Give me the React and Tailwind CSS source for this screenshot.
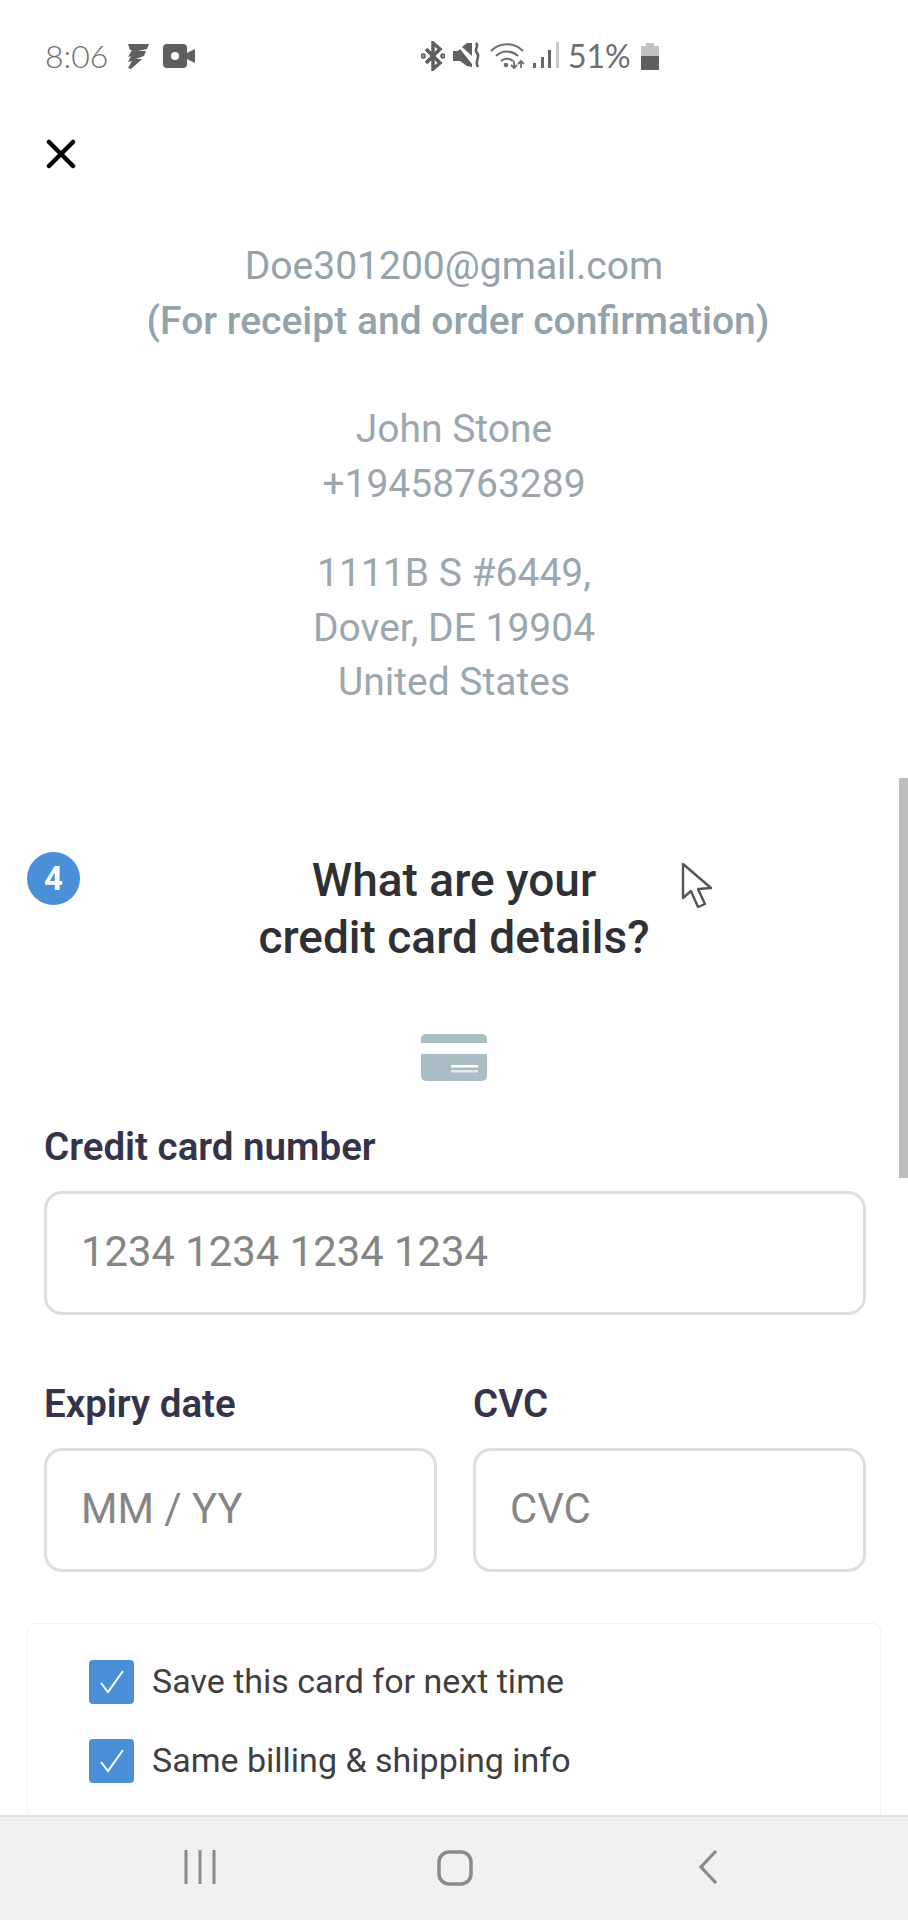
import React from 'react'

const roboto = { fontFamily: 'Roboto, "Liberation Sans", sans-serif' }

function StatusBar() {
  return (
    <div className="h-[92px] shrink-0 relative flex items-center text-[#6e6e6e] font-['Lato',sans-serif] font-light text-[32px] pt-[20px]">
      <span className="ml-[45px] w-[82px]">8:06</span>
      <svg width="22" height="26" viewBox="0 0 22 26" fill="#5f5f5f"><path d="M1 1h21l-2 5-9 2 8 0-2 5-8 3 6 0-3 3L4 26l-3-1 4-7-4 1 3-6-3 1 4-7-2 0z" /></svg>
      <svg className="ml-[14px]" width="32" height="24" viewBox="0 0 32 24"><rect x="0" y="0" width="24" height="24" rx="4" fill="#5f5f5f" /><path d="M24 9l8-4v14l-8-4z" fill="#5f5f5f" /><circle cx="12" cy="12" r="4" fill="#fff" /></svg>
      <svg className="ml-[226px]" width="24" height="30" viewBox="0 0 24 30" fill="none" stroke="#5f5f5f" strokeWidth="3.5"><path d="M5 8l14 14-7 6V2l7 6L5 22" /><circle cx="2" cy="15" r="1" /><circle cx="22" cy="15" r="1" /></svg>
      <svg className="ml-[8px]" width="28" height="28" viewBox="0 0 28 28" fill="#5f5f5f"><path d="M0 9h5l2-2 12 15v3l-5-1-7-5H0z" /><path d="M9 5l5-4h5v13z" /><path d="M23 1c4 4-3 6 1 10s-3 7 1 14" fill="none" stroke="#5f5f5f" strokeWidth="2.5" /></svg>
      <svg className="ml-[9px]" width="36" height="26" viewBox="0 0 36 26" fill="none" stroke="#6e6e6e" strokeWidth="2.2"><path d="M1 8c9-9 23-9 32 0" /><path d="M6 13c6-6 16-6 22 0" /><path d="M11 18c3-3 9-3 12 0" /><circle cx="16" cy="22" r="1.2" fill="#6e6e6e" /><path d="M24 18v7M21 22l3 3 3-3M31 25v-7M28 21l3-3 3 3" strokeWidth="1.8" /></svg>
      <svg className="ml-[7px]" width="26" height="28" viewBox="0 0 26 28"><rect x="0" y="21" width="3" height="5" fill="#666" /><rect x="8" y="15" width="3" height="11" fill="#666" /><rect x="15" y="8" width="3" height="18" fill="#666" /><rect x="23" y="0" width="3" height="26" fill="#c9c9c9" /></svg>
      <span className="ml-[9px] font-normal text-[32px]">51%</span>
      <svg className="ml-[10px]" width="18" height="27" viewBox="0 0 18 27"><path d="M5 0h8v3h5v24H0V3h5z" fill="#c2c2c2" /><rect x="0" y="13" width="18" height="14" fill="#5f5f5f" /></svg>
    </div>
  )
}

function Field({ label, placeholder, className }) {
  return (
    <div className={className}>
      {label && <div className="text-[38.5px] leading-[44px] font-semibold text-[#35334a] mb-[22px]">{label}</div>}
      <div className="h-[124px] rounded-[18px] border-[3px] border-[#dedede] flex items-center pl-[34px] text-[41.8px] text-[#858585]">{placeholder}</div>
    </div>
  )
}

function Check({ text }) {
  return (
    <div className="flex items-center h-[44px]">
      <div className="w-[45px] h-[44px] rounded-[4px] bg-[#4a90d9] flex items-center justify-center">
        <svg width="28" height="26" viewBox="0 0 28 26" fill="none" stroke="#fff" strokeWidth="2"><path d="M3 14l7 9L25 2" /></svg>
      </div>
      <span className="ml-[18px] text-[34px] text-[#3f3f3f]">{text}</span>
    </div>
  )
}

export default function App() {
  return (
    <div className="relative flex flex-col h-[1920px] w-[908px] overflow-hidden bg-white" style={roboto}>
      <StatusBar />

      <main className="flex-1 overflow-hidden">
        <div className="pl-[46px] pt-[47px]">
          <svg width="30" height="30" viewBox="0 0 30 30" fill="none" stroke="#000" strokeWidth="4.5" strokeLinecap="round"><path d="M3 3l24 24M27 3L3 27" /></svg>
        </div>

        <div className="mt-[70px] text-center text-[39px] leading-[54.5px] text-[#93a2ab]">
          <div>Doe301200@gmail.com</div>
          <div className="font-medium pl-[8px]">(For receipt and order confirmation)</div>
          <div className="mt-[54px] text-[#9aa7af]">John Stone</div>
          <div className="text-[#9aa7af]">+19458763289</div>
          <div className="mt-[35px] text-[#9aa7af]">1111B S #6449,</div>
          <div className="text-[#9aa7af]">Dover, DE 19904</div>
          <div className="text-[#9aa7af]">United States</div>
        </div>

        <div className="relative mt-[142px] text-center text-[46px] leading-[57px] font-medium text-[#2f3033]">
          <div className="absolute left-[27px] top-[0px] w-[53px] h-[53px] rounded-full bg-[#4a90d9] flex items-center justify-center text-white text-[33px] font-bold">4</div>
          <div>What are your</div>
          <div>credit card details?</div>
        </div>

        <div className="flex justify-center mt-[68px]">
          <svg width="66" height="47" viewBox="0 0 66 47"><rect width="66" height="47" rx="5" fill="#abbdc4" /><rect y="9" width="66" height="11" fill="#fff" /><rect x="30" y="31" width="27" height="2.5" fill="#fff" /><rect x="30" y="36" width="27" height="2.5" fill="#e4eaec" /></svg>
        </div>

        <div className="pl-[44px] pr-[42px] mt-[44px]">
          <Field label="Credit card number" placeholder="1234 1234 1234 1234" />
          <div className="grid grid-cols-2 gap-[36px] mt-[67px]">
            <Field label="Expiry date" placeholder="MM / YY" />
            <Field label="CVC" placeholder="CVC" />
          </div>
        </div>

        <div className="mx-[27px] mt-[51px] h-[300px] rounded-[8px] border border-[#f3f3f3] pl-[61px] pt-[36px] flex flex-col gap-[35px]">
          <Check text="Save this card for next time" />
          <Check text="Same billing & shipping info" />
        </div>
      </main>

      <nav className="h-[105px] shrink-0 bg-[#f1f1f1] border-t-2 border-[#e0e0e0] flex items-start pt-[33px] pl-[184px]">
        <svg width="32" height="34" viewBox="0 0 32 34" stroke="#8a8a8a" strokeWidth="3"><path d="M2 0v34M16 0v34M30 0v34" /></svg>
        <svg className="ml-[221px]" width="36" height="36" viewBox="0 0 36 36" fill="none" stroke="#8a8a8a" strokeWidth="3.5"><rect x="2" y="2" width="32" height="32" rx="10" /></svg>
        <svg className="ml-[225px]" width="20" height="34" viewBox="0 0 20 34" fill="none" stroke="#8a8a8a" strokeWidth="3.2"><path d="M18 1L3 17l15 16" /></svg>
      </nav>

      {/* scrollbar and mouse pointer sit on top of the page */}
      <div className="absolute right-0 top-[778px] w-[9px] h-[400px] bg-[#bdbdbd]" />
      <svg className="absolute left-[681px] top-[862px]" width="34" height="48" viewBox="0 0 34 48" fill="#fff" stroke="#555" strokeWidth="2.4" strokeLinejoin="round"><path d="M2 2v34l8-7 7 16 7-3-7-15 13-1z" /></svg>
    </div>
  )
}
